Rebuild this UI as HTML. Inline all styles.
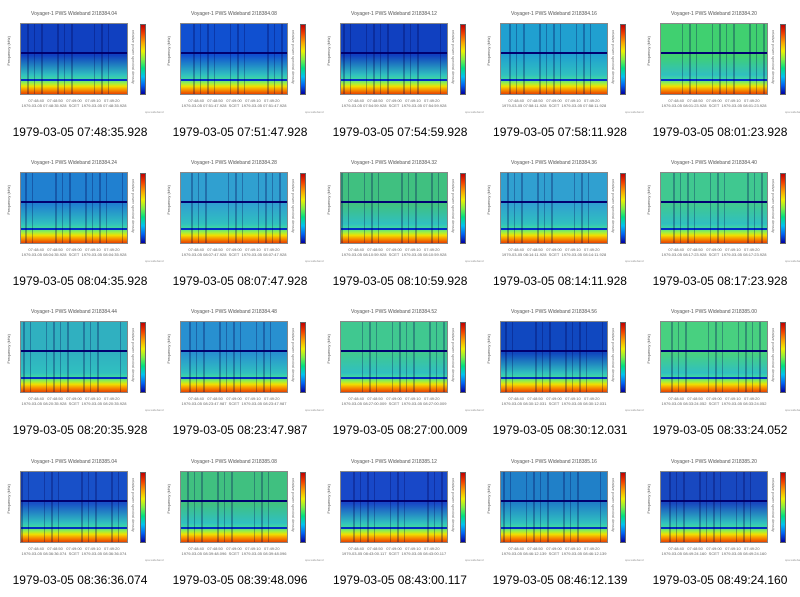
<!DOCTYPE html>
<html><head><meta charset="utf-8">
<style>
body{margin:0;width:800px;height:596px;background:#fff;position:relative;overflow:hidden;font-family:"Liberation Sans",sans-serif}
.c{position:absolute;width:160px;height:149px}
.t{position:absolute;left:20px;width:108px;top:11px;text-align:center;font-size:5px;color:#555;white-space:nowrap}
.p{position:absolute;left:20px;top:23px;width:108px;height:72px;overflow:hidden}
.p .s{position:absolute;inset:0}
.ax{position:absolute;left:20px;top:23px;width:108px;height:72px;border:1px solid #888;box-sizing:border-box}
.yl{position:absolute;left:6px;top:36px;font-size:4px;color:#555;writing-mode:vertical-rl;transform:rotate(180deg);white-space:nowrap}
.cb{position:absolute;left:140px;top:24px;width:6px;height:71px;background:linear-gradient(#c00000,#f04000,#f8a000,#f0f000,#80f040,#00e080,#00c0f0,#0060f0,#0000a0);border:1px solid #666;box-sizing:border-box}
.cl{position:absolute;left:131px;top:30px;font-size:4px;color:#777;writing-mode:vertical-rl;white-space:nowrap}
.xl{position:absolute;left:12px;top:98px;width:124px;font-size:4px;color:#666;line-height:5px;text-align:center;white-space:nowrap}
.cap{position:absolute;left:0;width:160px;top:125px;text-align:center;font-size:12px;color:#000}
.sm{position:absolute;left:145px;top:110px;font-size:3px;color:#999}
</style></head><body>
<script>
var caps=["1979-03-05 07:48:35.928","1979-03-05 07:51:47.928","1979-03-05 07:54:59.928","1979-03-05 07:58:11.928","1979-03-05 08:01:23.928",
"1979-03-05 08:04:35.928","1979-03-05 08:07:47.928","1979-03-05 08:10:59.928","1979-03-05 08:14:11.928","1979-03-05 08:17:23.928",
"1979-03-05 08:20:35.928","1979-03-05 08:23:47.987","1979-03-05 08:27:00.009","1979-03-05 08:30:12.031","1979-03-05 08:33:24.052",
"1979-03-05 08:36:36.074","1979-03-05 08:39:48.096","1979-03-05 08:43:00.117","1979-03-05 08:46:12.139","1979-03-05 08:49:24.160"];
var ids=["2/18384.04","2/18384.08","2/18384.12","2/18384.16","2/18384.20","2/18384.24","2/18384.28","2/18384.32","2/18384.36","2/18384.40","2/18384.44","2/18384.48","2/18384.52","2/18384.56","2/18385.00","2/18385.04","2/18385.08","2/18385.12","2/18385.16","2/18385.20"];
var base=["#1040c0","#1050d0","#1040c0","#20a0d0","#40d070","#2080d0","#30a0d0","#40c080","#30a0d0","#40c890","#30b0c0","#2890d0","#40c890","#1048c0","#48d080","#1850c8","#40c080","#1848c8","#2080c8","#1848c0"];
var rows=[0,149,298,448],h="";
for(var i=0;i<20;i++){var r=Math.floor(i/5),col=i%5,b=base[i];
var st="";for(var k=0;k<10;k++){var x=(k*37+i*13)%104;var w=1+((k*7+i)%2);st+="linear-gradient(90deg,transparent "+x+"px,rgba(0,0,80,0.3) "+x+"px,rgba(0,0,80,0.3) "+(x+w)+"px,transparent "+(x+w)+"px),";}
h+='<div class="c" style="left:'+(col*160)+'px;top:'+rows[r]+'px">'+
'<div class="t">Voyager-1 PWS Wideband '+ids[i]+'</div>'+
'<div class="yl">Frequency (kHz)</div>'+
'<div class="p"><div class="s" style="background:'+st+'linear-gradient(transparent 29px,#000070 29px,#000070 31px,transparent 31px,transparent 56px,#0030c0 56px,#0030c0 58px,transparent 58px),linear-gradient('+b+' 0,'+b+' 45%,#30c0c0 72%,#40d8a0 78%,#a0f040 84%,#f0e000 88%,#f89000 93%,#e03000 100%)"></div></div>'+
'<div class="ax"></div><div class="cb"></div><div class="cl">relative power spectral density</div>'+
'<div class="xl">07:48:40 &nbsp; 07:48:50 &nbsp; 07:49:00 &nbsp; 07:49:10 &nbsp; 07:49:20<br>1979-03-05 '+caps[i].slice(11)+' &nbsp;SCET&nbsp; 1979-03-05 '+caps[i].slice(11)+'</div>'+
'<div class="sm">spa.wideband</div>'+
'<div class="cap">'+caps[i]+'</div></div>';}
document.write(h);
</script>
</body></html>
